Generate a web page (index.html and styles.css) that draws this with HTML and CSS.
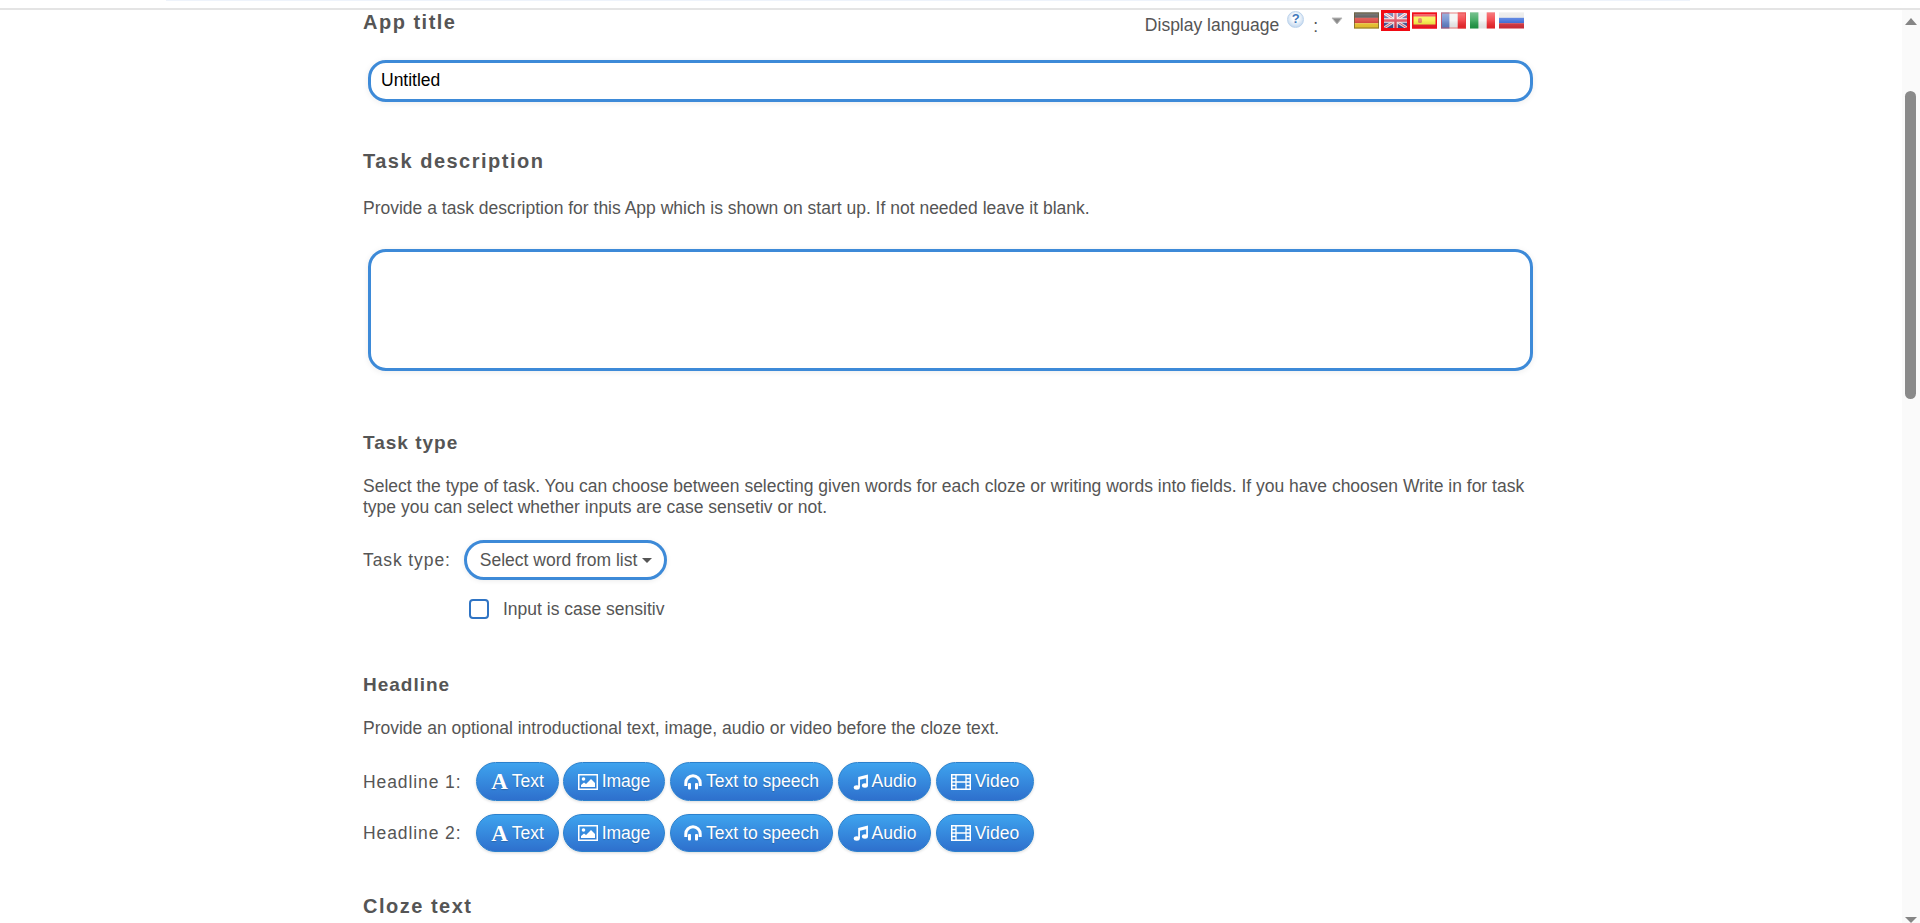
FILE: index.html
```html
<!DOCTYPE html>
<html lang="en">
<head>
<meta charset="utf-8">
<title>App settings</title>
<link rel="stylesheet" href="styles.css">
</head>
<body>
<svg class="defs" width="0" height="0" aria-hidden="true">
  <defs>
    <linearGradient id="gloss" x1="0" y1="0" x2="0" y2="1">
      <stop offset="0" stop-color="#fff" stop-opacity=".4"/>
      <stop offset=".5" stop-color="#fff" stop-opacity=".18"/>
      <stop offset="1" stop-color="#000" stop-opacity=".08"/>
    </linearGradient>
    <symbol id="i-image" viewBox="0 0 20 16">
      <rect x=".75" y=".75" width="18.500" height="14.500" fill="none" stroke="#fff" stroke-width="1.500"/>
      <circle cx="5.500" cy="5" r="1.800" fill="#fff"/>
      <path d="M3 13v-2l3-2.500 2 1.500 5-5 4 4v4z" fill="#fff"/>
    </symbol>
    <symbol id="i-head" viewBox="0 0 18 16">
      <path d="M1.800 12V9a7.200 7.200 0 0 1 14.400 0v3" fill="none" stroke="#fff" stroke-width="3"/>
      <rect x="4" y="9" width="3" height="6.500" rx="1" fill="#fff"/>
      <rect x="11" y="9" width="3" height="6.500" rx="1" fill="#fff"/>
    </symbol>
    <symbol id="i-music" viewBox="0 0 16 17">
      <path d="M5 3.200 15.400.6v11.600h-1.900V4.400L6.900 6v8.200H5z" fill="#fff"/>
      <ellipse cx="3.500" cy="14.300" rx="3.200" ry="2.400" fill="#fff"/>
      <ellipse cx="12.200" cy="12.300" rx="3.200" ry="2.400" fill="#fff"/>
    </symbol>
    <symbol id="i-film" viewBox="0 0 20 16">
      <rect x=".75" y=".75" width="18.500" height="14.500" fill="none" stroke="#fff" stroke-width="1.500"/>
      <path d="M5 1v14M15 1v14M1 4.500h4M1 8h4M1 11.500h4M15 4.500h4M15 8h4M15 11.500h4M5 8h10" fill="none" stroke="#fff" stroke-width="1.300"/>
    </symbol>
  </defs>
</svg>

<div class="topband"><i class="topband-tab"></i></div>

<main class="page">
  <header class="title-row">
    <h2 class="h h-title">App title</h2>
    <div class="lang">
      <span class="lang-label">Display language</span>
      <span class="help">?</span>
      <span class="lang-colon">:</span>
      <svg class="lang-caret" width="12" height="8" viewBox="0 0 12 8"><path d="M1 1h10L6 7z" fill="#8a8a8a" stroke="#bbb" stroke-width="1" stroke-linejoin="round"/></svg>
      <span class="flags">
        <svg class="flag" viewBox="0 0 25 16"><rect width="25" height="5.400" fill="#2b2b2b"/><rect y="5.300" width="25" height="5.400" fill="#d8322a"/><rect y="10.700" width="25" height="5.300" fill="#f3c92b"/><rect width="25" height="16" fill="url(#gloss)"/><rect x=".5" y=".5" width="24" height="15" fill="none" stroke="#6b5a2c" stroke-opacity=".7"/></svg>
        <svg class="flag flag-on" viewBox="0 0 25 16" preserveAspectRatio="none"><rect width="25" height="16" fill="#3d4f94"/><path d="M0 0 25 16M25 0 0 16" stroke="#f4e6ea" stroke-width="3.200"/><path d="M0 0 25 16M25 0 0 16" stroke="#d2505f" stroke-width="1"/><path d="M12.500 0v16M0 8h25" stroke="#f7eef0" stroke-width="5"/><path d="M12.500 0v16M0 8h25" stroke="#d8384c" stroke-width="2.600"/><rect width="25" height="16" fill="url(#gloss)"/></svg>
        <svg class="flag" viewBox="0 0 25 16"><rect width="25" height="16" fill="#ee1c25"/><rect y="4" width="25" height="8" fill="#f7ee3a"/><rect x="6" y="5.500" width="4" height="5" rx="1.500" fill="#e2764a"/><rect width="25" height="16" fill="url(#gloss)"/><rect x=".75" y=".75" width="23.500" height="14.500" fill="none" stroke="#f0101c" stroke-width="1.500"/></svg>
        <svg class="flag flag-gap" viewBox="0 0 25 16"><rect width="25" height="16" fill="#f2f2f2"/><rect width="8.400" height="16" fill="#5f7fc8"/><rect x="16.700" width="8.300" height="16" fill="#f2252b"/><rect width="25" height="16" fill="url(#gloss)"/><rect x=".5" y=".5" width="24" height="15" fill="none" stroke="#e23a3a" stroke-opacity=".6"/></svg>
        <svg class="flag flag-gap" viewBox="0 0 25 16"><rect width="25" height="16" fill="#f4f4f4"/><rect width="8.400" height="16" fill="#1f9a46"/><rect x="16.700" width="8.300" height="16" fill="#f2252b"/><rect width="25" height="16" fill="url(#gloss)"/></svg>
        <svg class="flag flag-gap" viewBox="0 0 25 16"><rect width="25" height="5.400" fill="#e4e4e4"/><rect y="5.300" width="25" height="5.400" fill="#2f62d8"/><rect y="10.700" width="25" height="5.300" fill="#d8303c"/><rect width="25" height="16" fill="url(#gloss)"/></svg>
      </span>
    </div>
  </header>

  <div class="field-box field-input"><span class="field-text">Untitled</span></div>

  <section class="sec sec-desc">
    <h2 class="h">Task description</h2>
    <p class="p">Provide a task description for this App which is shown on start up. If not needed leave it blank.</p>
    <div class="field-box field-area"></div>
  </section>

  <section class="sec sec-type">
    <h2 class="h h-small">Task type</h2>
    <p class="p">Select the type of task. You can choose between selecting given words for each cloze or writing words into fields. If you have choosen Write in for task type you can select whether inputs are case sensetiv or not.</p>
    <div class="type-row">
      <span class="label">Task type:</span>
      <div class="select"><span>Select word from list</span><i class="caret"></i></div>
    </div>
    <div class="check-row"><i class="check"></i><span>Input is case sensitiv</span></div>
  </section>

  <section class="sec sec-head">
    <h2 class="h h-small">Headline</h2>
    <p class="p">Provide an optional introductional text, image, audio or video before the cloze text.</p>
    <div class="media-row">
      <span class="label media-label">Headline 1:</span>
      <div class="btns">
        <a class="btn btn-text"><span class="glyph">A</span>Text</a>
        <a class="btn btn-image"><svg class="ic ic-w20"><use href="#i-image"/></svg>Image</a>
        <a class="btn btn-tts"><svg class="ic ic-w18"><use href="#i-head"/></svg>Text to speech</a>
        <a class="btn btn-audio"><svg class="ic ic-w16"><use href="#i-music"/></svg>Audio</a>
        <a class="btn btn-video"><svg class="ic ic-w20"><use href="#i-film"/></svg>Video</a>
      </div>
    </div>
    <div class="media-row media-row-2">
      <span class="label media-label">Headline 2:</span>
      <div class="btns">
        <a class="btn btn-text"><span class="glyph">A</span>Text</a>
        <a class="btn btn-image"><svg class="ic ic-w20"><use href="#i-image"/></svg>Image</a>
        <a class="btn btn-tts"><svg class="ic ic-w18"><use href="#i-head"/></svg>Text to speech</a>
        <a class="btn btn-audio"><svg class="ic ic-w16"><use href="#i-music"/></svg>Audio</a>
        <a class="btn btn-video"><svg class="ic ic-w20"><use href="#i-film"/></svg>Video</a>
      </div>
    </div>
  </section>

  <section class="sec sec-cloze">
    <h2 class="h">Cloze text</h2>
  </section>
</main>

<div class="scrollbar" aria-hidden="true">
  <i class="sb-up"></i>
  <i class="sb-thumb"></i>
  <i class="sb-down"></i>
</div>
</body>
</html>
```

FILE: styles.css
```css
* { box-sizing: border-box; }
html, body { margin: 0; height: 923px; overflow: hidden; background: #fff; }
body { font-family: "Liberation Sans", Arial, sans-serif; font-size: 17.5px; color: #555; position: relative; }
.defs { position: absolute; }

.topband { height: 10px; background: #fff; border-bottom: 2px solid #e4e4e4; padding: 0 230px 0 166px; }
.topband-tab { display: block; height: 1px; background: #eef3fb; }

.page { width: 1170px; margin-left: 363px; }

.h { margin: 0; font-size: 20px; line-height: 22px; font-weight: bold; letter-spacing: 1.5px; color: #555; }
.h-title { padding-top: 1px; }
.h-small { font-size: 19px; letter-spacing: 1px; }
.p { margin: 0; line-height: 21px; color: #555; }

.title-row { display: flex; justify-content: space-between; align-items: flex-start; height: 50px; }
.lang { display: flex; align-items: flex-start; margin-right: 9px; color: #555; }
.lang-label { margin-top: 4px; line-height: 22px; }
.help { width: 17px; height: 17px; margin: 1px 0 0 8px; border-radius: 50%; background: radial-gradient(circle at 50% 40%, #fff 25%, #a9c7e8 100%); border: 1px solid #bcd3ec; color: #3f78bb; font-size: 13px; font-weight: bold; line-height: 14px; text-align: center; }
.lang-colon { margin: 5px 0 0 9px; line-height: 22px; }
.lang-caret { margin: 7px 0 0 13px; }
.flags { display: flex; margin: 2px 0 0 11px; gap: 2px; align-items: flex-start; flex: none; }
.flag { width: 25px; height: 17px; display: block; flex: none; }
.flag-on { width: 29px; height: 21px; margin-top: -2px; border: 3px solid #f00a14; }
.flag-gap { margin-left: 2px; }

.field-box { margin-left: 5px; width: 1165px; background: #fff; border: 3px solid #3d8ad8; box-shadow: 0 1px 6px rgba(0,0,0,.08); }
.field-input { height: 42px; border-radius: 18px; padding: 0 10px 2px; display: flex; align-items: center; }
.field-text { color: #000; }
.field-area { height: 122px; border-radius: 18px; margin-top: 30px; }

.sec-desc { margin-top: 48px; }
.sec-desc .p { margin-top: 26px; }
.sec-type { margin-top: 61px; }
.sec-type .p { margin-top: 22px; }
.type-row { display: flex; align-items: center; margin-top: 22px; }
.label { letter-spacing: .9px; line-height: 22px; }
.select { margin-left: 13px; height: 40px; padding: 0 12px 0 13px; display: flex; align-items: center; border: 3px solid #3d8ad8; border-radius: 20px; background: #fff; box-shadow: 0 1px 5px rgba(0,0,0,.08); }
.caret { margin-left: 5px; width: 0; height: 0; border-left: 5px solid transparent; border-right: 5px solid transparent; border-top: 5px solid #555; }
.check-row { display: flex; align-items: center; margin: 9px 0 0 106px; height: 40px; }
.check { width: 20px; height: 20px; border: 2px solid #2f74c4; border-radius: 4px; margin-right: 14px; }

.sec-head { margin-top: 45px; }
.sec-head .p { margin-top: 22px; }
.media-row { display: flex; align-items: center; margin-top: 23px; }
.media-row-2 { margin-top: 13px; }
.media-label { width: 113px; }
.btns { display: flex; gap: 5px; }
.btn { display: flex; align-items: center; justify-content: center; height: 39px; border-radius: 20px; color: #fff; border: 1px solid #2b80cc; background: linear-gradient(#3ea3ee, #2e70cd); box-shadow: 0 1px 3px rgba(0,0,0,.15); text-shadow: 0 1px 1px rgba(0,0,0,.2); white-space: nowrap; }
.btn-text { width: 83px; margin-right: -1px; }
.btn-image { width: 102px; }
.btn-tts { width: 163px; }
.btn-audio { width: 93px; }
.btn-video { width: 98px; }
.media-row-2 .btn { height: 38px; }
.glyph { font-family: "Liberation Serif", serif; font-weight: bold; font-size: 23px; margin-right: 4px; line-height: 1; }
.ic { display: block; height: 16px; margin-right: 4px; flex: none; }
.ic-w20 { width: 20px; }
.ic-w18 { width: 18px; }
.ic-w16 { width: 16px; margin-right: 3px; }

.sec-cloze { margin-top: 43px; }

.scrollbar { position: absolute; top: 10px; right: 0; bottom: 0; width: 18px; background: #fafafa; }
.sb-up { position: absolute; top: 8px; left: 3px; width: 0; height: 0; border-left: 6.500px solid transparent; border-right: 6.500px solid transparent; border-bottom: 7px solid #858585; }
.sb-thumb { position: absolute; top: 81px; left: 3px; width: 11px; height: 308px; border-radius: 6px; background: #8a8a8a; }
.sb-down { position: absolute; bottom: 0; left: 3px; width: 0; height: 0; border-left: 6.500px solid transparent; border-right: 6.500px solid transparent; border-top: 6px solid #858585; }
```
